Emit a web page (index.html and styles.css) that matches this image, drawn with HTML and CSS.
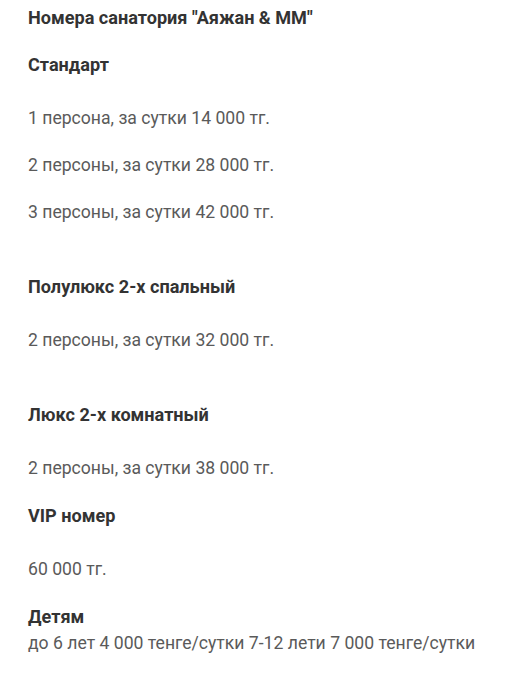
FILE: index.html
```html
<!DOCTYPE html>
<html lang="ru">
<head>
    <meta charset="UTF-8">
    <meta name="viewport" content="width=device-width, initial-scale=1.0">
    <title>Номера</title>
    <link rel="stylesheet" href="styles.css">
</head>
<body>
    <div class="prices">
        <h4 class="title">Номера санатория "Аяжан &amp; MM"</h4>

        <h4>Стандарт</h4>
        <p>1 персона, за сутки 14 000 тг.</p>
        <p>2 персоны, за сутки 28 000 тг.</p>
        <p>3 персоны, за сутки 42 000 тг.</p>

        <h4 class="spaced">Полулюкс 2-х спальный</h4>
        <p>2 персоны, за сутки 32 000 тг.</p>

        <h4 class="spaced">Люкс 2-х комнатный</h4>
        <p>2 персоны, за сутки 38 000 тг.</p>

        <h4>VIP номер</h4>
        <p>60 000 тг.</p>

        <div class="kids">
            <h4>Детям</h4>
            <span>до 6 лет 4 000 тенге/сутки 7-12 лети 7 000 тенге/сутки</span>
        </div>
    </div>
</body>
</html>
```

FILE: styles.css
```css
*{
    box-sizing: border-box;
}

body{
    margin: 0;
    background: #fff;
    font-family: Roboto, 'Noto Sans', sans-serif;
}

.prices{
    padding: 4px 28px;
}

.prices h4{
    margin: 20px 0 0;
    font-size: 18.1px;
    line-height: 27px;
    font-weight: bold;
    color: #333;
}

.prices h4.title{
    margin-top: 0;
}

.prices h4.spaced{
    margin-top: 47px;
}

.prices p{
    margin: 20px 0 0;
    font-size: 17.6px;
    line-height: 27px;
    color: #5a5a5a;
}

.prices h4 + p{
    margin-top: 27px;
}

.kids{
    margin-top: 20px;
}

.kids h4{
    margin-top: 0;
}

.kids span{
    display: block;
    font-size: 17.6px;
    line-height: 27px;
    color: #5a5a5a;
}
```
